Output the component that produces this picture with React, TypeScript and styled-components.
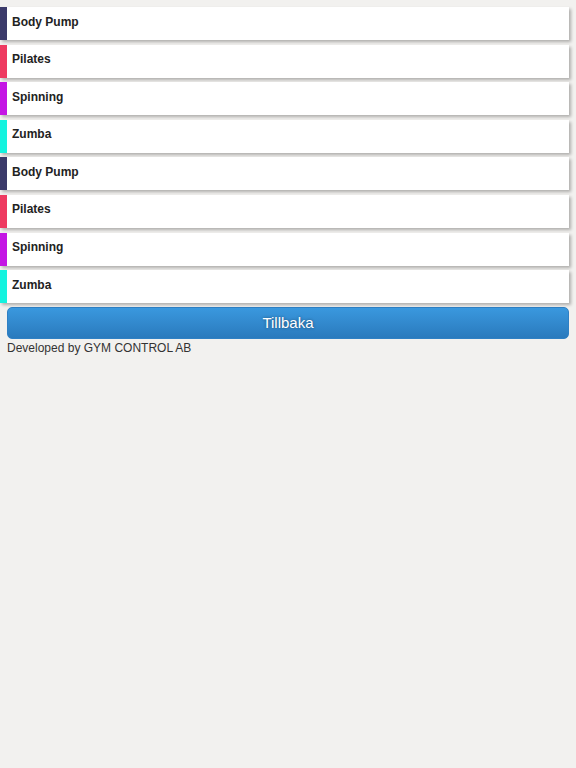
import React from "react";
import styled, { createGlobalStyle } from "styled-components";

const GlobalStyle = createGlobalStyle`
  html, body {
    margin: 0;
    padding: 0;
    background-color: #f2f1ef;
    font-family: "Liberation Sans", Arial, sans-serif;
  }
`;

const classes = [
  { name: "Body Pump", color: "#3b3a6a" },
  { name: "Pilates", color: "#ee3a60" },
  { name: "Spinning", color: "#c415e4" },
  { name: "Zumba", color: "#14f3df" },
  { name: "Body Pump", color: "#3b3a6a" },
  { name: "Pilates", color: "#ee3a60" },
  { name: "Spinning", color: "#c415e4" },
  { name: "Zumba", color: "#14f3df" },
];

const App: React.FC = () => {
  return (
    <Page>
      <GlobalStyle />
      <List>
        {classes.map((c, i) => (
          <Row key={i}>
            <ColorBar $color={c.color} />
            <RowLabel>{c.name}</RowLabel>
          </Row>
        ))}
      </List>
      <BackButton>Tillbaka</BackButton>
      <Footer>Developed by GYM CONTROL AB</Footer>
    </Page>
  );
};

const Page = styled.div`
  width: 576px;
  min-height: 768px;
  padding-top: 7px;
  box-sizing: border-box;
`;

const List = styled.div`
  display: flex;
  flex-direction: column;
  gap: 4.6px;
  width: 569px;
`;

const Row = styled.div`
  display: flex;
  align-items: center;
  height: 33px;
  background-color: #ffffff;
  box-shadow: 2px 2px 3px rgba(0, 0, 0, 0.28);
`;

const ColorBar = styled.div<{ $color: string }>`
  width: 7px;
  align-self: stretch;
  background-color: ${(p) => p.$color};
`;

const RowLabel = styled.span`
  padding: 0 0 4px 5px;
  font-size: 12px;
  font-weight: bold;
  color: #222222;
`;

const BackButton = styled.button`
  display: block;
  margin: 4px 0 0 7px;
  width: 562px;
  height: 32px;
  padding: 0 0 2px;
  border: 1px solid #2f80c4;
  border-radius: 5px;
  background: linear-gradient(to bottom, #3a98de, #2a7abd);
  color: #ffffff;
  font-family: "Liberation Sans", Arial, sans-serif;
  font-size: 15px;
  text-shadow: 0 0 3px rgba(0, 0, 0, 0.45);
  cursor: pointer;
`;

const Footer = styled.div`
  margin: 2px 0 0 7px;
  font-size: 12px;
  line-height: 14px;
  color: #333333;
`;

export default App;
